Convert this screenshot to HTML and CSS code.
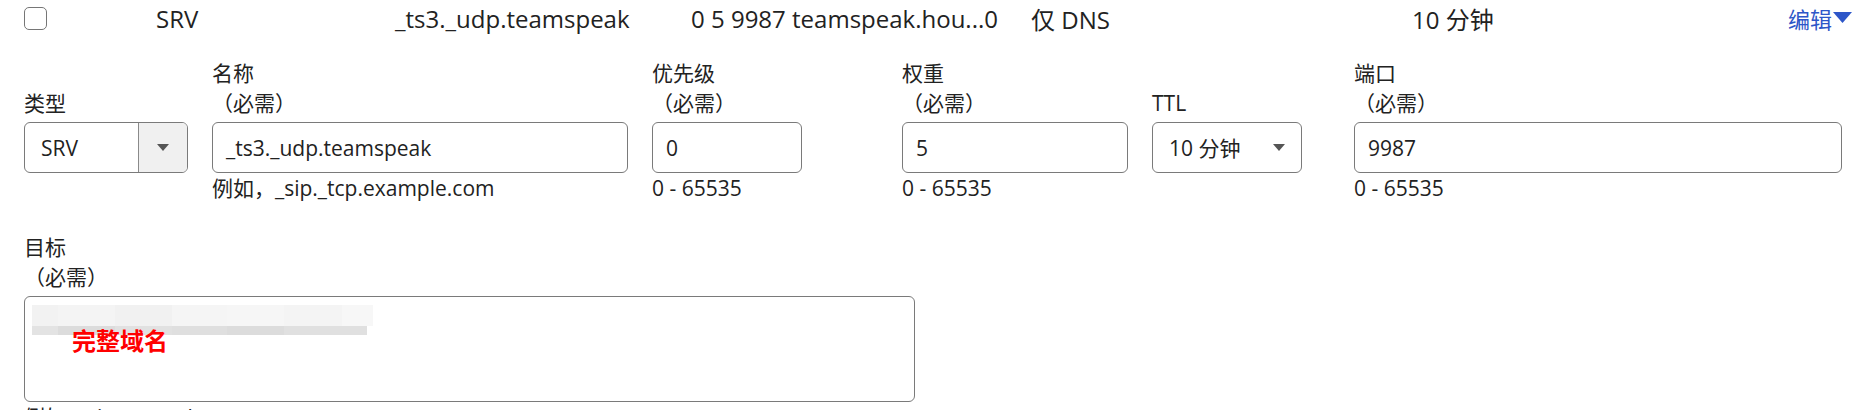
FILE: index.html
```html
<!DOCTYPE html>
<html lang="zh-CN">
<head>
<meta charset="utf-8">
<title>DNS 记录编辑</title>
<link rel="stylesheet" href="styles.css">
</head>
<body>
<div class="row-head">
  <span class="c-check"><input type="checkbox" class="cb"></span>
  <span>SRV</span>
  <span>_ts3._udp.teamspeak</span>
  <span>0 5 9987 teamspeak.hou...0</span>
  <span>仅 DNS</span>
  <span>10 分钟</span>
  <a class="edit">编辑<svg class="edit-caret" width="19" height="12" viewBox="0 0 19 12"><polygon points="0,0 19,0 9.5,11" /></svg></a>
</div>

<form class="editor">
  <div class="fields">
    <div class="field w-type">
      <div class="lbl"><span>类型</span></div>
      <div class="ctrl sel-type">
        <span class="val">SRV</span>
        <span class="sel-btn"><svg width="12" height="8" viewBox="0 0 12 8"><polygon points="0,0 12,0 6,7" /></svg></span>
      </div>
    </div>
    <div class="field w-name">
      <div class="lbl"><span>名称</span><span>（必需）</span></div>
      <div class="ctrl">_ts3._udp.teamspeak</div>
      <div class="hint">例如，_sip._tcp.example.com</div>
    </div>
    <div class="field w-prio">
      <div class="lbl"><span>优先级</span><span>（必需）</span></div>
      <div class="ctrl narrow">0</div>
      <div class="hint">0 - 65535</div>
    </div>
    <div class="field w-weight">
      <div class="lbl"><span>权重</span><span>（必需）</span></div>
      <div class="ctrl">5</div>
      <div class="hint">0 - 65535</div>
    </div>
    <div class="field w-ttl">
      <div class="lbl"><span>TTL</span></div>
      <div class="ctrl narrow sel-ttl">
        <span class="val">10 分钟</span>
        <svg width="12" height="8" viewBox="0 0 12 8"><polygon points="0,0 12,0 6,7" /></svg>
      </div>
    </div>
    <div class="field w-port">
      <div class="lbl"><span>端口</span><span>（必需）</span></div>
      <div class="ctrl">9987</div>
      <div class="hint">0 - 65535</div>
    </div>
  </div>

  <div class="field target">
    <div class="lbl"><span>目标</span><span>（必需）</span></div>
    <div class="ctrl area">
      <div class="mosaic-light"></div>
      <div class="mosaic-dark"></div>
      <span class="note">完整域名</span>
    </div>
    <div class="hint">例如，sip.example.com</div>
  </div>
</form>
</body>
</html>
```

FILE: styles.css
```css
html, body {
  margin: 0;
  background: #ffffff;
}

body {
  font-family: "Open Sans", "Noto Sans CJK SC", sans-serif;
  color: #222222;
  overflow: hidden;
  height: 410px;
}

.row-head {
  display: grid;
  grid-template-columns: 132px 239px 296px 340px 381px 1fr auto;
  align-items: center;
  height: 36px;
  padding: 0 8px 0 24px;
  font-size: 24px;
  white-space: nowrap;
}

.c-check {
  display: flex;
  align-items: center;
}

.cb {
  appearance: none;
  -webkit-appearance: none;
  margin: 0;
  width: 23px;
  height: 23px;
  border: 1.5px solid #767676;
  border-radius: 5px;
  background: #fff;
  box-sizing: border-box;
}

.edit {
  display: flex;
  align-items: center;
  color: #2d56c8;
  font-size: 22px;
}

.edit-caret {
  fill: #2d56c8;
  margin-left: 1px;
}

.editor {
  padding: 22px 18px 0 24px;
  font-size: 21px;
  line-height: 30px;
}

.fields {
  display: flex;
  gap: 24px;
}

.field {
  display: flex;
  flex-direction: column;
}

.w-type { width: 164px; }
.w-name { width: 416px; }
.w-prio { width: 226px; }
.w-weight { width: 226px; }
.w-ttl { width: 178px; }
.w-port { width: 488px; }

.lbl {
  height: 60px;
  display: flex;
  flex-direction: column;
  justify-content: flex-end;
  white-space: nowrap;
}

.ctrl {
  margin-top: 4px;
  height: 51px;
  box-sizing: border-box;
  border: 1px solid #7a7a7a;
  border-radius: 6px;
  display: flex;
  align-items: center;
  padding: 0 13px;
  background: #fff;
  white-space: nowrap;
}

.narrow {
  width: 150px;
}

.hint {
  white-space: nowrap;
}

.sel-type {
  padding: 0;
  overflow: hidden;
}

.sel-type .val {
  flex: 1;
  padding-left: 16px;
}

.sel-btn {
  align-self: stretch;
  width: 48px;
  border-left: 1px solid #8a8a8a;
  background: #f0f0f0;
  display: flex;
  align-items: center;
  justify-content: center;
}

.sel-btn svg,
.sel-ttl svg {
  fill: #555555;
}

.sel-ttl {
  padding: 0 16px 0 16px;
}

.sel-ttl .val {
  flex: 1;
}

.target {
  margin-top: 29px;
}

.area {
  position: relative;
  width: 891px;
  height: 106px;
  display: block;
  padding: 8px 0 0 7px;
}

.mosaic-light {
  width: 341px;
  height: 21px;
  background: linear-gradient(90deg,
    #f2f2f2 0, #f2f2f2 26px,
    #f4f4f4 26px, #f4f4f4 83px,
    #f1f1f1 83px, #f1f1f1 140px,
    #f5f5f5 140px, #f5f5f5 195px,
    #f6f6f6 195px, #f6f6f6 252px,
    #f4f4f4 252px, #f4f4f4 310px,
    #f7f7f7 310px);
}

.mosaic-dark {
  width: 335px;
  height: 9px;
  background: linear-gradient(90deg,
    #e3e3e3 0, #e3e3e3 26px,
    #dcdcdc 26px, #dcdcdc 83px,
    #e1e1e1 83px, #e1e1e1 140px,
    #dfdfdf 140px, #dfdfdf 195px,
    #dcdcdc 195px, #dcdcdc 252px,
    #e0e0e0 252px);
}

.note {
  position: absolute;
  left: 47px;
  top: 27px;
  color: #ff0000;
  font-weight: 700;
  font-size: 24px;
  line-height: 32px;
  font-family: "Noto Sans CJK SC", sans-serif;
}
```
